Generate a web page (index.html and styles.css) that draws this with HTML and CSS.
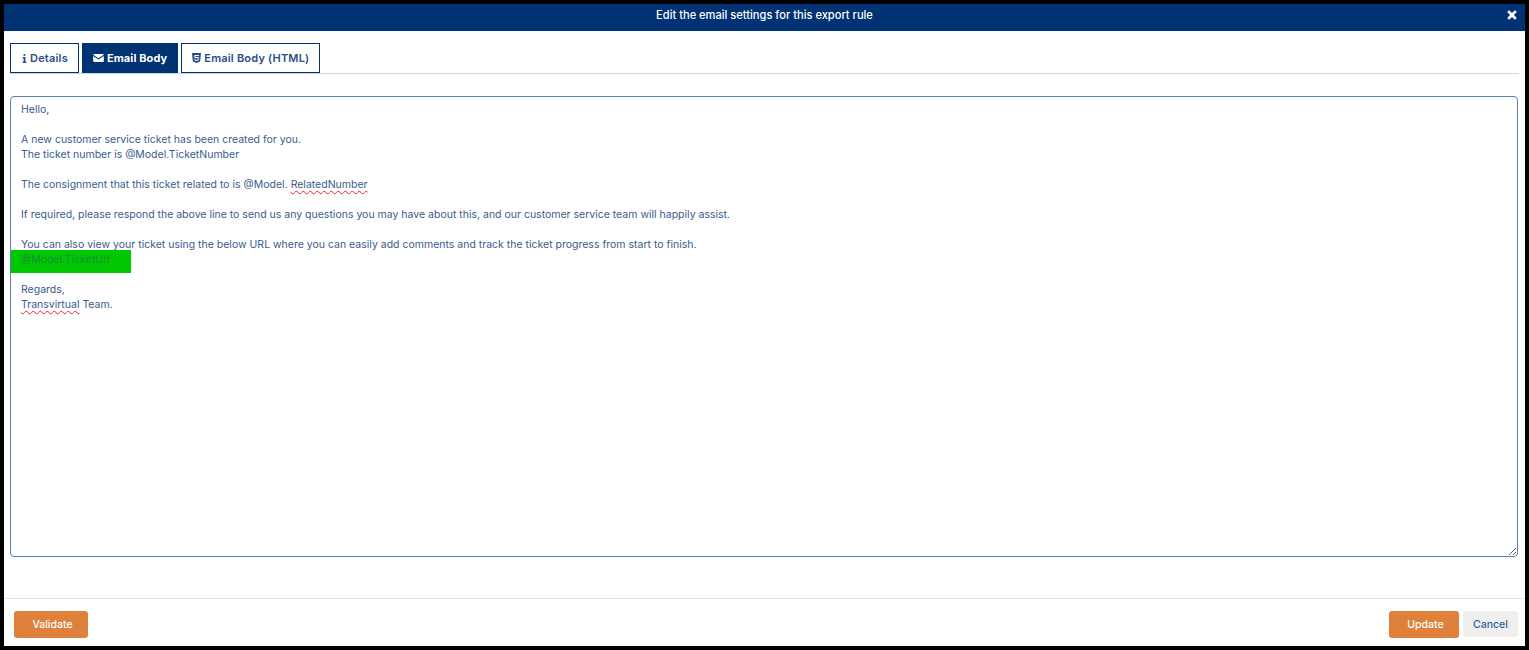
FILE: index.html
```html
<!DOCTYPE html>
<html lang="en">
<head>
    <meta charset="UTF-8">
    <title>Edit the email settings for this export rule</title>
    <link rel="stylesheet" href="styles.css">
</head>
<body>
    <div class="modal">
        <!-- Header -->
        <div class="modal-header">
            <div class="modal-title">Edit the email settings for this export rule</div>
            <svg class="close-icon" viewBox="0 0 10 10"><path d="M1 2.600 2.600 1 5 3.400 7.400 1 9 2.600 6.600 5 9 7.400 7.400 9 5 6.600 2.600 9 1 7.400 3.400 5 1 2.600Z"/></svg>
        </div>

        <!-- Tabs -->
        <div class="tabs">
            <a class="tab" href="#">
                <svg class="tab-icon icon-info" viewBox="0 0 5 10"><path d="M1.400 0h2.100v2H1.400zM.5 3.400h3v4.900h1V10H.5V8.300h1V5.100h-1z"/></svg>
                Details
            </a>
            <a class="tab active" href="#">
                <svg class="tab-icon icon-mail" viewBox="0 0 12 9"><path d="M1 0h10a1 1 0 0 1 1 .9L6 4.900 0 .9A1 1 0 0 1 1 0Z"/><path d="M0 2.200 6 6.200l6-4V8a1 1 0 0 1-1 1H1a1 1 0 0 1-1-1Z"/></svg>
                Email Body
            </a>
            <a class="tab" href="#">
                <svg class="tab-icon icon-html" viewBox="0 0 10 11"><path fill-rule="evenodd" d="M0 0h10L9.100 9.500 5 11 .9 9.500ZM2.500 2.200l.3 3.400h3.600l-.1 1.500L5 7.600l-1.300-.5-.1-.8H2.600l.2 1.800L5 8.900l2.200-.8.4-3.700H3.900l-.1-1h3.900l.1-1.200Z"/></svg>
                Email Body (HTML)
            </a>
        </div>

        <!-- Email body -->
        <div class="modal-body">
            <div class="email-editor">
                <p>Hello,</p>
                <p>&nbsp;</p>
                <p>A new customer service ticket has been created for you.</p>
                <p>The ticket number is @Model.TicketNumber</p>
                <p>&nbsp;</p>
                <p>The consignment that this ticket related to is @Model. <span class="misspelt">RelatedNumber</span></p>
                <p>&nbsp;</p>
                <p>If required, please respond the above line to send us any questions you may have about this, and our customer service team will happily assist.</p>
                <p>&nbsp;</p>
                <p>You can also view your ticket using the below URL where you can easily add comments and track the ticket progress from start to finish.</p>
                <p class="highlight">@Model.TicketUrl</p>
                <p>&nbsp;</p>
                <p>Regards,</p>
                <p><span class="misspelt">Transvirtual</span> Team.</p>
            </div>
        </div>

        <!-- Footer -->
        <div class="modal-footer">
            <button class="btn btn-orange btn-validate">Validate</button>
            <div class="footer-right">
                <button class="btn btn-orange btn-update">Update</button>
                <button class="btn btn-light">Cancel</button>
            </div>
        </div>
    </div>
</body>
</html>
```

FILE: styles.css
```css
/* Global Styles */
html, body {
    height: 100%;
}
body {
    margin: 0;
    background-color: #000;
    font-family: 'Inter', 'Liberation Sans', sans-serif;
    font-size: 10.5px;
    color: #3a5b8e;
    overflow: hidden;
}

/* Modal */
.modal {
    height: 642px;
    margin: 4px;
    background-color: #fff;
    display: flex;
    flex-direction: column;
}
.modal-header {
    height: 27px;
    flex: none;
    background-color: #003274;
    display: flex;
    justify-content: center;
    position: relative;
}
.modal-title {
    color: #fff;
    font-size: 11.1px;
    font-weight: 500;
    line-height: 23px;
}
.close-icon {
    position: absolute;
    right: 7px;
    top: 5px;
    width: 12px;
    height: 12px;
    fill: #fff;
}

/* Tabs */
.tabs {
    display: flex;
    gap: 3px;
    margin: 12px 6px 0 6px;
    height: 30px;
    flex: none;
    border-bottom: 1px solid #ced4da;
}
.tab {
    height: 30px;
    box-sizing: border-box;
    display: flex;
    align-items: center;
    gap: 3px;
    padding: 0 10px;
    border: 1px solid #003274;
    color: #2a4d85;
    font-size: 11px;
    font-weight: 600;
    letter-spacing: 0.2px;
    text-decoration: none;
}
.tab.active {
    background-color: #003274;
    color: #fff;
    font-weight: 700;
    letter-spacing: 0.1px;
}
.tab-icon {
    fill: currentColor;
    flex: none;
}
.icon-info {
    width: 5px;
    height: 9px;
    margin-left: 1px;
}
.icon-mail {
    width: 11px;
    height: 8px;
}
.icon-html {
    width: 9px;
    height: 10px;
}

/* Email body */
.modal-body {
    flex: 1;
    padding: 22px 7px 41px 6px;
    display: flex;
    min-height: 0;
}
.email-editor {
    flex: 1;
    box-sizing: border-box;
    padding: 5px 10px;
    border: 1px solid #5b80b2;
    border-radius: 4px;
    line-height: 15px;
    resize: vertical;
    overflow: auto;
}
.email-editor p {
    margin: 0;
}
.misspelt {
    text-decoration: underline wavy #e8262c 1px;
    text-underline-offset: 2px;
}
.email-editor .highlight {
    width: 110px;
    margin: -2px 0 -6px -10px;
    padding: 2px 0 6px 10px;
    background-color: #00c800;
    color: #1d8a3c;
}

/* Footer */
.modal-footer {
    height: 48px;
    flex: none;
    border-top: 1px solid #e3e3e3;
    box-sizing: border-box;
    padding: 12px 7px 0 10px;
    display: flex;
    justify-content: space-between;
    align-items: flex-start;
}
.footer-right {
    display: flex;
    gap: 4px;
}
.btn {
    height: 27px;
    border: none;
    border-radius: 3px;
    font-family: inherit;
    font-size: 10.5px;
    font-weight: 500;
    padding: 0;
}
.btn-orange {
    background-color: #e0813b;
    color: #fff;
    padding-left: 3px;
}
.btn-validate {
    width: 74px;
}
.btn-update {
    width: 70px;
}
.btn-light {
    width: 55px;
    height: 26px;
    background-color: #efefef;
    color: #2f5f9e;
}
```
